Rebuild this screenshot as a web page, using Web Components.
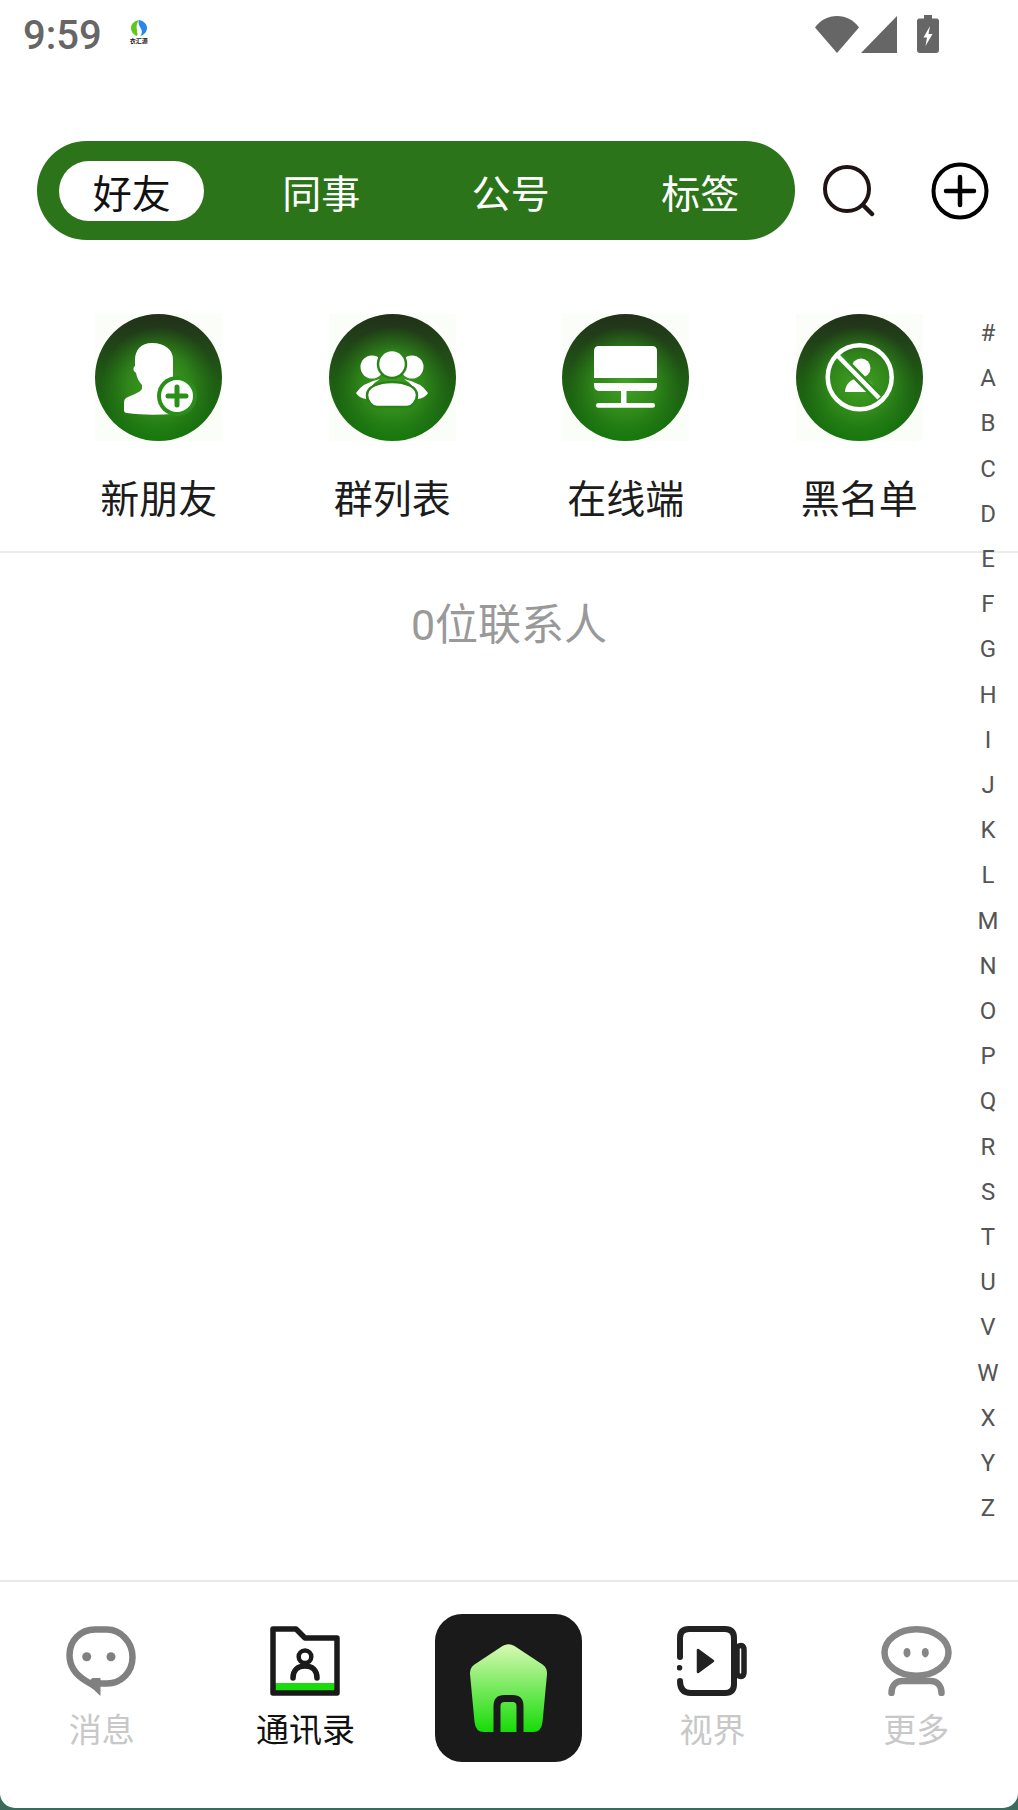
<!DOCTYPE html>
<html lang="zh">
<head>
<meta charset="utf-8">
<title>通讯录</title>
<style>
html, body { margin: 0; padding: 0; background: #3a6b5c; }
</style>
</head>
<body>
<contacts-app>
  <status-bar slot="top" time="9:59"></status-bar>
  <tab-header slot="top">
    <tab-pill active>好友</tab-pill>
    <tab-pill>同事</tab-pill>
    <tab-pill>公号</tab-pill>
    <tab-pill>标签</tab-pill>
  </tab-header>
  <shortcut-row slot="top">
    <shortcut-item icon="add" label="新朋友"></shortcut-item>
    <shortcut-item icon="group" label="群列表"></shortcut-item>
    <shortcut-item icon="screen" label="在线端"></shortcut-item>
    <shortcut-item icon="block" label="黑名单"></shortcut-item>
  </shortcut-row>
  <contact-count slot="top">0位联系人</contact-count>
  <alpha-index slot="side"></alpha-index>
  <bottom-nav slot="bottom">
    <nav-item icon="chat" label="消息"></nav-item>
    <nav-item icon="folder" label="通讯录" active></nav-item>
    <home-button></home-button>
    <nav-item icon="video" label="视界"></nav-item>
    <nav-item icon="robot" label="更多"></nav-item>
  </bottom-nav>
</contacts-app>

<script>
const CJK = '"Noto Sans CJK SC", "Noto Sans", sans-serif';

const AppTemplate = document.createElement('template');
AppTemplate.innerHTML = `
<style>
:host {
  display: flex;
  flex-direction: column;
  position: relative;
  width: 1018px;
  height: 1808px;
  background: #fff;
  border-radius: 0 0 15px 15px;
  font-family: Roboto, ${CJK};
  overflow: hidden;
}
.top { flex: 1; display: block; }
</style>
<div class="top"><slot name="top"></slot></div>
<slot name="side"></slot>
<slot name="bottom"></slot>
`;
class ContactsApp extends HTMLElement {
  constructor() {
    super();
    this.attachShadow({ mode: 'open' });
    this.shadowRoot.appendChild(AppTemplate.content.cloneNode(true));
  }
}
customElements.define('contacts-app', ContactsApp);

const StatusTemplate = document.createElement('template');
StatusTemplate.innerHTML = `
<style>
:host {
  display: flex;
  align-items: flex-start;
  height: 70px;
  padding-left: 23px;
  color: #666;
}
.time {
  font: 500 40px/47px Roboto, sans-serif;
  margin-top: 12px;
}
.logo {
  display: flex;
  flex-direction: column;
  align-items: center;
  width: 22px;
  margin: 20px 0 0 26px;
}
.logo span {
  font: 700 6px/7px ${CJK};
  color: #222;
  margin-top: 1px;
  white-space: nowrap;
}
.icons {
  display: flex;
  margin-left: auto;
  margin-right: 79px;
  margin-top: 15px;
}
svg { display: block; }
</style>
<span class="time"></span>
<div class="logo">
  <svg width="16" height="16" viewBox="0 0 16 16">
    <path fill="#5ec81e" d="M8 0C3 1 0 4 0 8c0 4 3 7 6 8l1-4C5 9 5 4 8 0z"/>
    <path fill="#2a86e8" d="M8 0c5 1 8 4 8 8 0 4-3 7-7 8 3-3 2-6 0-9C8 5 7 3 8 0z"/>
    <circle cx="7.5" cy="12" r="1.6" fill="#fff"/>
  </svg>
  <span>衣汇源</span>
</div>
<div class="icons">
  <svg width="44" height="37" viewBox="0 0 44 37" style="margin-top:1px">
    <path fill="#666" d="M0 11.5C5.5 4 13 0 22 0s16.500 4 22 11.500L22 37z"/>
  </svg>
  <svg width="36" height="37" viewBox="0 0 36 37" style="margin:1px 0 0 2px">
    <path fill="#666" d="M36 0v37H0z"/>
  </svg>
  <svg width="22" height="38" viewBox="0 0 22 38" style="margin-left:20px">
    <path fill="#666" d="M7 0h8v3.500h4.500Q22 3.500 22 6v29q0 3-3 3H3q-3 0-3-3V6q0-2.500 2.500-2.500H7z"/>
    <path fill="#fff" d="M13 11 6.500 22.500H10L8.500 31 15.500 19H11.500z"/>
  </svg>
</div>
`;
class StatusBar extends HTMLElement {
  constructor() {
    super();
    this.attachShadow({ mode: 'open' });
    this.shadowRoot.appendChild(StatusTemplate.content.cloneNode(true));
    this.shadowRoot.querySelector('.time').textContent = this.getAttribute('time');
  }
}
customElements.define('status-bar', StatusBar);

const HeaderTemplate = document.createElement('template');
HeaderTemplate.innerHTML = `
<style>
:host {
  display: flex;
  align-items: center;
  margin-top: 71px;
  padding-left: 37px;
}
.pill {
  display: grid;
  grid-template-columns: repeat(4, 1fr);
  align-items: center;
  width: 758px;
  height: 99px;
  border-radius: 50px;
  background: #2b7419;
}
.search { margin-left: 28px; }
.add { margin-left: 56px; }
svg { display: block; }
</style>
<div class="pill"><slot></slot></div>
<svg class="search" width="52" height="52" viewBox="0 0 52 52">
  <circle cx="24" cy="24" r="22" fill="none" stroke="#1f1414" stroke-width="4"/>
  <path d="M40 40l9 9" stroke="#1f1414" stroke-width="4.500" stroke-linecap="round"/>
</svg>
<svg class="add" width="58" height="58" viewBox="0 0 58 58">
  <circle cx="29" cy="29" r="26.500" fill="none" stroke="#000" stroke-width="4"/>
  <path d="M29 15v28M15 29h28" stroke="#000" stroke-width="4.500" stroke-linecap="round"/>
</svg>
`;
class TabHeader extends HTMLElement {
  constructor() {
    super();
    this.attachShadow({ mode: 'open' });
    this.shadowRoot.appendChild(HeaderTemplate.content.cloneNode(true));
  }
}
customElements.define('tab-header', TabHeader);

const PillTemplate = document.createElement('template');
PillTemplate.innerHTML = `
<style>
:host {
  display: flex;
  justify-content: center;
  font: 400 39px/60px ${CJK};
  color: #fff;
}
span {
  display: block;
  width: 145px;
  height: 60px;
  text-align: center;
  border-radius: 30px;
}
:host([active]) span { background: #fff; color: #111; }
</style>
<span><slot></slot></span>
`;
class TabPill extends HTMLElement {
  constructor() {
    super();
    this.attachShadow({ mode: 'open' });
    this.shadowRoot.appendChild(PillTemplate.content.cloneNode(true));
  }
}
customElements.define('tab-pill', TabPill);

const RowTemplate = document.createElement('template');
RowTemplate.innerHTML = `
<style>
:host {
  display: grid;
  grid-template-columns: repeat(4, 233.500px);
  margin-top: 74px;
  padding: 0 0 0 42px;
  height: 237px;
  border-bottom: 2px solid #ececec;
}
</style>
<slot></slot>
`;
class ShortcutRow extends HTMLElement {
  constructor() {
    super();
    this.attachShadow({ mode: 'open' });
    this.shadowRoot.appendChild(RowTemplate.content.cloneNode(true));
  }
}
customElements.define('shortcut-row', ShortcutRow);

// white glyphs on the green disc, 127 unit box
const ShortcutIcons = {
  add: `
    <path fill="#fff" d="M57 29c-11 0-17 7-17 17v6c-2 1-2 5 0 6l1 1c1 5 3 9 6 12v4c-3 4-10 6-14 8-3 1-4 3-4 6v7c0 2 1 3 3 3 14 2 30 2 46 1V45c0-9-8-16-21-16z"/>
    <circle cx="82" cy="82" r="20" fill="#2a8f18"/>
    <circle cx="82" cy="82" r="16" fill="#fff"/>
    <path d="M82 73v18M73 82h18" stroke="#2a8f18" stroke-width="5" stroke-linecap="round"/>`,
  group: `
    <circle cx="43" cy="53" r="11.500" fill="#fff"/>
    <circle cx="83" cy="53" r="11.500" fill="#fff"/>
    <path fill="#fff" d="M27 79Q33 69 51 65 39 72 37 85 30 84 27 79z"/>
    <path fill="#fff" d="M99 79Q93 69 75 65 87 72 89 85 96 84 99 79z"/>
    <circle cx="63" cy="50" r="14" fill="#fff" stroke="#2a8318" stroke-width="2.500"/>
    <path fill="#fff" stroke="#2a8318" stroke-width="2.500" d="M38 81c0-8 11-13 25-13s25 5 25 13c0 6-5 12-10 12H48c-5 0-10-6-10-12z"/>`,
  screen: `
    <path fill="#fff" d="M37 32h53q5 0 5 5v27H32V37q0-5 5-5z"/>
    <path fill="#fff" d="M32 69h63v2q0 6-6 6H38q-6 0-6-6z"/>
    <rect x="59" y="77" width="5.500" height="13" fill="#fff"/>
    <rect x="34" y="89" width="59" height="4.800" rx="2.400" fill="#fff"/>`,
  block: `
    <circle cx="65" cy="54" r="9.500" fill="#fff"/>
    <path fill="#fff" d="M49 78c0-8 7-14 15-14s15 6 15 14z"/>
    <path d="M41 41l42 43" stroke="#2f8f1c" stroke-width="10"/>
    <circle cx="63.700" cy="63.300" r="32" fill="none" stroke="#fff" stroke-width="4.500"/>
    <path d="M41 41l42 43" stroke="#fff" stroke-width="4.500"/>`
};

const ItemTemplate = document.createElement('template');
ItemTemplate.innerHTML = `
<style>
:host {
  display: flex;
  flex-direction: column;
  align-items: center;
}
svg { display: block; }
span {
  font: 400 39px/58px ${CJK};
  color: #1c1c1c;
  margin-top: 26px;
}
</style>
<svg width="127" height="127" viewBox="0 0 127 127"></svg>
<span></span>
`;
let discCount = 0;
class ShortcutItem extends HTMLElement {
  constructor() {
    super();
    this.attachShadow({ mode: 'open' });
    this.shadowRoot.appendChild(ItemTemplate.content.cloneNode(true));
    const n = discCount++;
    this.shadowRoot.querySelector('svg').innerHTML = `
      <defs>
        <linearGradient id="base${n}" x1="0" y1="0" x2="0" y2="1">
          <stop offset="0" stop-color="#22301a"/>
          <stop offset="0.5" stop-color="#1f5a14"/>
          <stop offset="1" stop-color="#17780d"/>
        </linearGradient>
        <radialGradient id="glow${n}" cx="0.5" cy="0.55" r="0.45">
          <stop offset="0" stop-color="#41a322"/>
          <stop offset="0.55" stop-color="#35931c" stop-opacity="0.75"/>
          <stop offset="1" stop-color="#2a8a18" stop-opacity="0"/>
        </radialGradient>
      </defs>
      <rect width="127" height="127" fill="#fbfef8"/>
      <circle cx="63.500" cy="63.500" r="63.500" fill="url(#base${n})"/>
      <circle cx="63.500" cy="63.500" r="63.500" fill="url(#glow${n})"/>
      ${ShortcutIcons[this.getAttribute('icon')]}`;
    this.shadowRoot.querySelector('span').textContent = this.getAttribute('label');
  }
}
customElements.define('shortcut-item', ShortcutItem);

const CountTemplate = document.createElement('template');
CountTemplate.innerHTML = `
<style>
:host {
  display: block;
  text-align: center;
  font: 400 43px/62px Roboto, ${CJK};
  color: #999;
  margin-top: 41px;
}
</style>
<slot></slot>
`;
class ContactCount extends HTMLElement {
  constructor() {
    super();
    this.attachShadow({ mode: 'open' });
    this.shadowRoot.appendChild(CountTemplate.content.cloneNode(true));
  }
}
customElements.define('contact-count', ContactCount);

const AlphaTemplate = document.createElement('template');
AlphaTemplate.innerHTML = `
<style>
:host {
  position: absolute;
  top: 311px;
  right: 0;
  width: 60px;
  display: flex;
  flex-direction: column;
  align-items: center;
  font: 400 24px/45.210px Roboto, sans-serif;
  color: #555;
}
</style>
`;
class AlphaIndex extends HTMLElement {
  constructor() {
    super();
    this.attachShadow({ mode: 'open' });
    this.shadowRoot.appendChild(AlphaTemplate.content.cloneNode(true));
    for (const ch of '#ABCDEFGHIJKLMNOPQRSTUVWXYZ') {
      const s = document.createElement('span');
      s.textContent = ch;
      this.shadowRoot.appendChild(s);
    }
  }
}
customElements.define('alpha-index', AlphaIndex);

const NavTemplate = document.createElement('template');
NavTemplate.innerHTML = `
<style>
:host {
  display: grid;
  grid-template-columns: repeat(5, 1fr);
  height: 226px;
  border-top: 2px solid #e8e8e8;
}
</style>
<slot></slot>
`;
class BottomNav extends HTMLElement {
  constructor() {
    super();
    this.attachShadow({ mode: 'open' });
    this.shadowRoot.appendChild(NavTemplate.content.cloneNode(true));
  }
}
customElements.define('bottom-nav', BottomNav);

const NavIcons = {
  chat: `
    <path fill="none" stroke="#808080" stroke-width="6.500" stroke-linejoin="round" d="M34 57.500h7c14 0 25.500-11 25.500-26.500S54 3.500 41 3.500H29C14 3.500 3.500 15 3.500 29c0 11 6.500 20 16.500 26l11 6.500"/>
    <path fill="#808080" d="M34.500 70V52l-8 0-6 5z"/>
    <circle cx="20.700" cy="30.700" r="4.500" fill="#808080"/>
    <circle cx="45" cy="30.700" r="4.500" fill="#808080"/>`,
  folder: `
    <path fill="#1adc0d" d="M5 57h59.500v5.500h2V66H5z"/>
    <path fill="none" stroke="#1a1a1a" stroke-width="5.500" stroke-linejoin="round" d="M3 3h23l9 9h32v55H3z"/>
    <circle cx="35" cy="30.700" r="6.300" fill="none" stroke="#1a1a1a" stroke-width="4.500"/>
    <path fill="none" stroke="#1a1a1a" stroke-width="5.500" stroke-linecap="round" d="M23 52c0-8 5-12 12-12s12 4 12 12"/>`,
  video: `
    <path fill="none" stroke="#222" stroke-width="6" stroke-linecap="round" d="M3 31V12q0-9 9-9h36q9 0 9 9v46q0 9-9 9H14Q3 67 3 55"/>
    <circle cx="2.500" cy="41.700" r="2.800" fill="#222"/>
    <path fill="none" stroke="#222" stroke-width="5.500" stroke-linejoin="round" d="M60 21q7-4 7 3v22q0 7-7 3z"/>
    <path fill="#222" stroke="#222" stroke-width="2.500" stroke-linejoin="round" d="M21 24v22l15-11z"/>`,
  robot: `
    <ellipse cx="35.500" cy="26.500" rx="32" ry="23.200" fill="none" stroke="#868686" stroke-width="6.500"/>
    <ellipse cx="26" cy="26.700" rx="3.500" ry="4.800" fill="#868686"/>
    <ellipse cx="44.300" cy="26.700" rx="3.500" ry="4.800" fill="#868686"/>
    <path fill="none" stroke="#868686" stroke-width="6.500" stroke-linecap="round" d="M10.500 67c0-7 4-12 11-12h28c7 0 11 5 11 12"/>`
};

const NavItemTemplate = document.createElement('template');
NavItemTemplate.innerHTML = `
<style>
:host {
  display: flex;
  flex-direction: column;
  align-items: center;
  padding-top: 44px;
  font: 400 33px/46px ${CJK};
  color: #c8c8c8;
}
:host([active]) { color: #111; }
svg { display: block; }
span { margin-top: 9px; }
</style>
<svg width="71" height="70" viewBox="0 0 71 70"></svg>
<span></span>
`;
class NavItem extends HTMLElement {
  constructor() {
    super();
    this.attachShadow({ mode: 'open' });
    this.shadowRoot.appendChild(NavItemTemplate.content.cloneNode(true));
    this.shadowRoot.querySelector('svg').innerHTML = NavIcons[this.getAttribute('icon')];
    this.shadowRoot.querySelector('span').textContent = this.getAttribute('label');
  }
}
customElements.define('nav-item', NavItem);

const HomeTemplate = document.createElement('template');
HomeTemplate.innerHTML = `
<style>
:host {
  display: flex;
  justify-content: center;
  padding-top: 32px;
}
div {
  width: 147px;
  height: 148px;
  border-radius: 27px;
  background: #1a1a1a;
}
svg { display: block; }
</style>
<div>
  <svg width="147" height="148" viewBox="0 0 147 148">
    <defs>
      <linearGradient id="house" x1="0" y1="0" x2="0" y2="1">
        <stop offset="0" stop-color="#d8f9b4"/>
        <stop offset="1" stop-color="#16db08"/>
      </linearGradient>
    </defs>
    <path fill="url(#house)" d="M67.500 32Q73.500 28.500 79.500 32L107.500 50.500Q112.500 54 112 60L107.500 108Q106.500 118 98 118H49Q40.500 118 39.500 108L35 60Q34.500 54 39.500 50.500z"/>
    <path fill="none" stroke="#1a1a1a" stroke-width="7" d="M62 118V92q0-7.500 7.500-7.500h8q7.500 0 7.500 7.500v26"/>
  </svg>
</div>
`;
class HomeButton extends HTMLElement {
  constructor() {
    super();
    this.attachShadow({ mode: 'open' });
    this.shadowRoot.appendChild(HomeTemplate.content.cloneNode(true));
  }
}
customElements.define('home-button', HomeButton);
</script>
</body>
</html>
